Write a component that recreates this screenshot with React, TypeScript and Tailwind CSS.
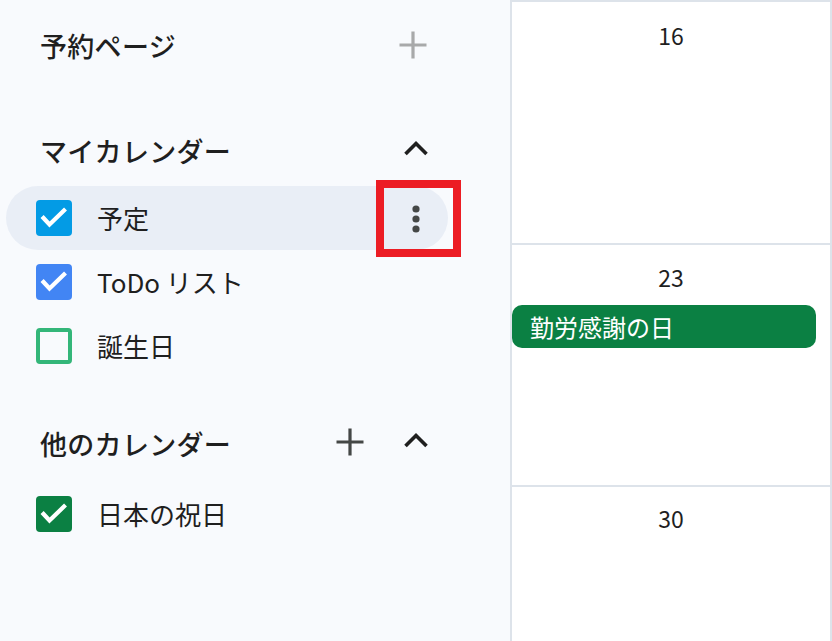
import React from "react";

const FONT = '"Noto Sans CJK JP", "Noto Sans", sans-serif';

function Check() {
  return (
    <svg width="36" height="36" viewBox="0 0 36 36" className="block">
      <polyline points="7.5,18 13.5,24.5 28,10.5" fill="none" stroke="#ffffff" strokeWidth="4.2" strokeLinecap="square" strokeLinejoin="miter" />
    </svg>
  );
}

function Box({ color, checked }: { color: string; checked: boolean }) {
  if (!checked) {
    return <div className="w-[36px] h-[36px] rounded-[4px] border-[4px] shrink-0" style={{ borderColor: color }} />;
  }
  return (
    <div className="w-[36px] h-[36px] rounded-[4px] shrink-0" style={{ backgroundColor: color }}>
      <Check />
    </div>
  );
}

function Plus({ color }: { color: string }) {
  return (
    <svg width="28" height="28" viewBox="0 0 28 28" className="block">
      <path d="M14 0.5V27.5M0.5 14H27.5" stroke={color} strokeWidth="3.2" fill="none" />
    </svg>
  );
}

function Chevron() {
  return (
    <svg width="26" height="16" viewBox="0 0 26 16" className="block">
      <polyline points="2.5,14 13,3.5 23.5,14" fill="none" stroke="#1f1f1f" strokeWidth="3.6" />
    </svg>
  );
}

function Dots() {
  return (
    <svg width="10" height="32" viewBox="0 0 10 32" className="block">
      <circle cx="5" cy="6" r="3.6" fill="#444746" />
      <circle cx="5" cy="16" r="3.6" fill="#444746" />
      <circle cx="5" cy="26" r="3.6" fill="#444746" />
    </svg>
  );
}

function Item({ label, color, checked, active }: { label: string; color: string; checked: boolean; active?: boolean }) {
  return (
    <div className={"relative ml-[6px] w-[442px] h-[64px] flex items-center pl-[30px] rounded-full " + (active ? "bg-[#e9eef6]" : "")}>
      <Box color={color} checked={checked} />
      <span className="ml-[25px] text-[26px] text-[#1f1f1f] leading-none">{label}</span>
      {active && (
        <>
          <div className="ml-auto w-[64px] h-[64px] flex items-center justify-center pt-[2px]">
            <Dots />
          </div>
          <div className="absolute left-[370px] top-[-6px] w-[85px] h-[77px] border-[8px] border-[#ec1c24]" />
        </>
      )}
    </div>
  );
}

export default function App() {
  return (
    <div className="w-[832px] h-[641px] flex bg-[#f8fafd] overflow-hidden" style={{ fontFamily: FONT }}>
      <div className="w-[510px] shrink-0 flex flex-col">
        <div className="h-[90px] flex items-center pl-[40px] w-[448px]">
          <span className="text-[27px] font-medium text-[#1f1f1f] leading-none tracking-[0.3px]">予約ページ</span>
          <div className="ml-auto w-[64px] flex items-center justify-center pr-[6px]">
            <Plus color="#a8a9aa" />
          </div>
        </div>
        <div className="mt-[28px] h-[64px] flex items-center pl-[40px] w-[448px]">
          <span className="text-[27px] font-medium text-[#1f1f1f] leading-none tracking-[0.3px]">マイカレンダー</span>
          <div className="ml-auto w-[64px] flex items-center justify-center pb-[4px]">
            <Chevron />
          </div>
        </div>
        <div className="mt-[4px] flex flex-col">
          <Item label="予定" color="#039be5" checked active />
          <Item label="ToDo リスト" color="#4285f4" checked />
          <Item label="誕生日" color="#33b679" checked={false} />
        </div>
        <div className="mt-[33px] h-[64px] flex items-center pl-[40px] w-[448px]">
          <span className="text-[27px] font-medium text-[#1f1f1f] leading-none tracking-[0.3px]">他のカレンダー</span>
          <div className="ml-auto w-[64px] flex items-center justify-center pb-[2px]">
            <Plus color="#444746" />
          </div>
          <div className="ml-[2px] w-[64px] flex items-center justify-center pb-[6px]">
            <Chevron />
          </div>
        </div>
        <div className="mt-[7px]">
          <Item label="日本の祝日" color="#0b8043" checked />
        </div>
      </div>
      <div className="flex-1 flex flex-col bg-white border-l-2 border-r-2 border-t-2 border-[#dde3ea]">
        <div className="h-[243px] shrink-0 border-b-2 border-[#dde3ea] flex flex-col">
          <div className="pt-[17px] text-center text-[23px] leading-[32px] text-[#1f1f1f]">16</div>
        </div>
        <div className="h-[242px] shrink-0 border-b-2 border-[#dde3ea] flex flex-col">
          <div className="pt-[16px] text-center text-[23px] leading-[32px] text-[#1f1f1f]">23</div>
          <div className="mt-[12px] mr-[14px] h-[43px] rounded-[10px] bg-[#0b8043] flex items-center pl-[18px]">
            <span className="text-[24px] text-white leading-none">勤労感謝の日</span>
          </div>
        </div>
        <div className="flex-1 flex flex-col">
          <div className="pt-[15px] text-center text-[23px] leading-[32px] text-[#1f1f1f]">30</div>
        </div>
      </div>
    </div>
  );
}
